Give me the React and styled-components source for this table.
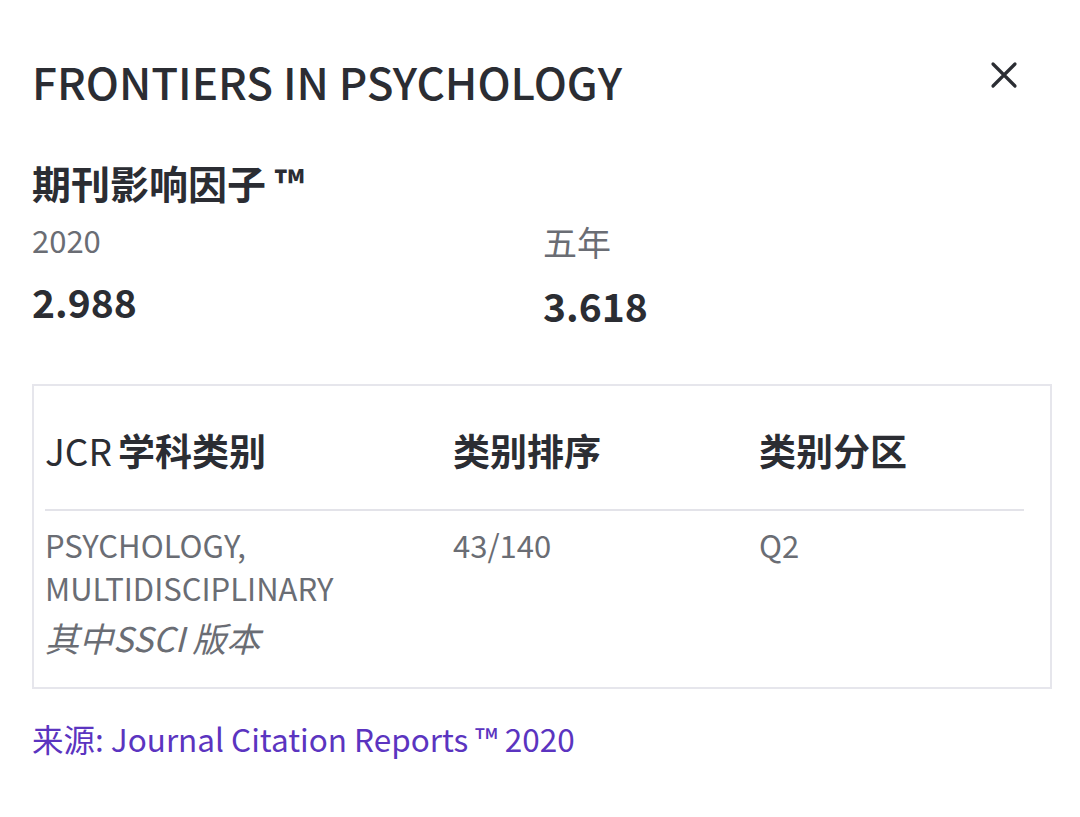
import React from 'react'
import styled, { createGlobalStyle } from 'styled-components'

const GlobalStyle = createGlobalStyle`
  body {
    margin: 0;
    background: #ffffff;
    font-family: "Noto Sans CJK SC", "Noto Sans", sans-serif;
  }
`

const Panel = styled.div`
  width: 1080px;
  box-sizing: border-box;
  padding: 49px 28px 40px 32px;
  color: #2b2d33;
`

const Header = styled.div`
  display: flex;
  justify-content: space-between;
  align-items: flex-start;
`

const Title = styled.h1`
  margin: 0;
  font-size: 44px;
  font-weight: 500;
  line-height: 64px;
  color: #2b2d33;
`

const CloseButton = styled.button`
  border: 0;
  background: transparent;
  padding: 0;
  margin: 10px 32px 0 0;
  width: 32px;
  height: 32px;
  cursor: pointer;
`

const SectionTitle = styled.h2`
  margin: 45px 0 0;
  font-size: 39px;
  font-weight: 700;
  line-height: 48px;
`

const Metrics = styled.div`
  display: grid;
  grid-template-columns: 511px 1fr;
  margin-top: 14px;
`

const Metric = styled.div`
  display: flex;
  flex-direction: column;
`

const MetricLabel = styled.div`
  font-size: ${p => (p.$cjk ? '34px' : '31px')};
  line-height: ${p => (p.$cjk ? '44px' : '40px')};
  color: #6a6d74;
`

const MetricValue = styled.div`
  font-size: 39px;
  font-weight: 700;
  line-height: 52px;
  margin-top: 15px;
  color: #2b2d33;
`

const TableBox = styled.div`
  margin-top: 53px;
  border: 2px solid #e6e6ec;
  padding: 0 26px 22px 11px;
`

const Row = styled.div`
  display: grid;
  grid-template-columns: 408px 306px 1fr;
  border-bottom: ${p => (p.head ? '2px solid #e3e3e9' : '0')};
  padding: ${p => (p.head ? '37px 0 32px' : '12px 0 0')};
`

const HeadCell = styled.div`
  font-size: 37px;
  font-weight: 700;
  line-height: 54px;
  color: #2b2d33;
`

const Abbr = styled.span`
  font-weight: 400;
  margin-right: 6px;
`

const Cell = styled.div`
  font-size: 31px;
  line-height: 43px;
  color: #6a6d74;
`

const Edition = styled.div`
  font-style: italic;
  font-size: 34px;
  line-height: 54px;
  margin-top: 2px;
  color: #6a6d74;
`

const Source = styled.p`
  margin: 26px 0 0;
  font-size: 31.5px;
  line-height: 46px;
  color: #5b34c0;
`

export default function App() {
  return (
    <>
      <GlobalStyle />
      <Panel>
        <Header>
          <Title>FRONTIERS IN PSYCHOLOGY</Title>
          <CloseButton aria-label="close">
            <svg width="32" height="32" viewBox="0 0 32 32">
              <path d="M5 5 L27 27 M27 5 L5 27" stroke="#2b2d33" strokeWidth="3.2" strokeLinecap="round" />
            </svg>
          </CloseButton>
        </Header>

        <SectionTitle>期刊影响因子 ™</SectionTitle>

        <Metrics>
          <Metric>
            <MetricLabel>2020</MetricLabel>
            <MetricValue>2.988</MetricValue>
          </Metric>
          <Metric>
            <MetricLabel $cjk>五年</MetricLabel>
            <MetricValue>3.618</MetricValue>
          </Metric>
        </Metrics>

        <TableBox>
          <Row head>
            <HeadCell><Abbr>JCR</Abbr>学科类别</HeadCell>
            <HeadCell>类别排序</HeadCell>
            <HeadCell>类别分区</HeadCell>
          </Row>
          <Row>
            <div>
              <Cell>PSYCHOLOGY,<br />MULTIDISCIPLINARY</Cell>
              <Edition>其中SSCI 版本</Edition>
            </div>
            <Cell>43/140</Cell>
            <Cell>Q2</Cell>
          </Row>
        </TableBox>

        <Source>来源: Journal Citation Reports ™ 2020</Source>
      </Panel>
    </>
  )
}
